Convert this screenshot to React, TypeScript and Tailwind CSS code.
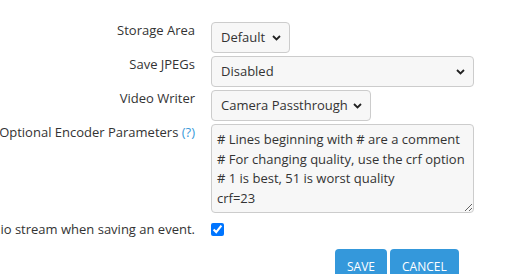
import React from "react";

const Chevron = () => (
  <svg width="9" height="6" viewBox="0 0 9 6" className="shrink-0">
    <path d="M1 1 L4.5 4.5 L8 1" fill="none" stroke="#222" strokeWidth="1.8" />
  </svg>
);

function FakeSelect({ value, width }: { value: string; width: string }) {
  return (
    <div
      className={`${width} h-[31px] flex items-center justify-between pl-[9px] pr-[8px] bg-[#f7f7f7] border border-[#cccccc] rounded-[4px] text-[#333]`}
    >
      <span>{value}</span>
      <Chevron />
    </div>
  );
}

function Row({ label, children, className = "" }: { label: React.ReactNode; children: React.ReactNode; className?: string }) {
  return (
    <div className={`flex items-start ${className}`}>
      <div className="w-[195px] shrink-0 flex justify-end whitespace-nowrap leading-[19px] -mt-[1px]">
        {label}
      </div>
      <div className="ml-[16px]">{children}</div>
    </div>
  );
}

export default function App() {
  return (
    <div className="w-[514px] h-[274px] overflow-hidden bg-white font-['Open_Sans',sans-serif] text-[13px] text-[#333] pt-[22px]">
      <div className="flex flex-col gap-[3px]">
        <Row label="Storage Area">
          <FakeSelect value="Default" width="w-[79px]" />
        </Row>
        <Row label="Save JPEGs">
          <FakeSelect value="Disabled" width="w-[263px]" />
        </Row>
        <Row label="Video Writer">
          <FakeSelect value="Camera Passthrough" width="w-[160px]" />
        </Row>
        <Row
          label={
            <span>
              Optional Encoder Parameters <span className="text-[#3a9ad9]">(?)</span>
            </span>
          }
        >
          <textarea
            readOnly
            className="block w-[263px] h-[89px] bg-[#f7f7f7] border border-[#cccccc] rounded-[4px] px-[5px] pt-[5px] pb-[3px] leading-[19.5px] text-[#333] outline-none resize whitespace-pre"
            defaultValue={"# Lines beginning with # are a comment\n# For changing quality, use the crf option\n# 1 is best, 51 is worst quality\ncrf=23"}
          />
        </Row>
      </div>
      <Row label="Record audio stream when saving an event." className="mt-[8px]">
        <input type="checkbox" defaultChecked className="block m-0 mt-[2px] w-[13px] h-[13px]" />
      </Row>
      <div className="flex gap-[3px] pl-[335px] mt-[10px]">
        <button className="h-[34px] px-[12px] pt-[2px] bg-[#3498db] text-white text-[12px] rounded-t-[4px] uppercase">
          Save
        </button>
        <button className="h-[34px] px-[12px] pt-[2px] bg-[#3498db] text-white text-[12px] rounded-t-[4px] uppercase">
          Cancel
        </button>
      </div>
    </div>
  );
}
